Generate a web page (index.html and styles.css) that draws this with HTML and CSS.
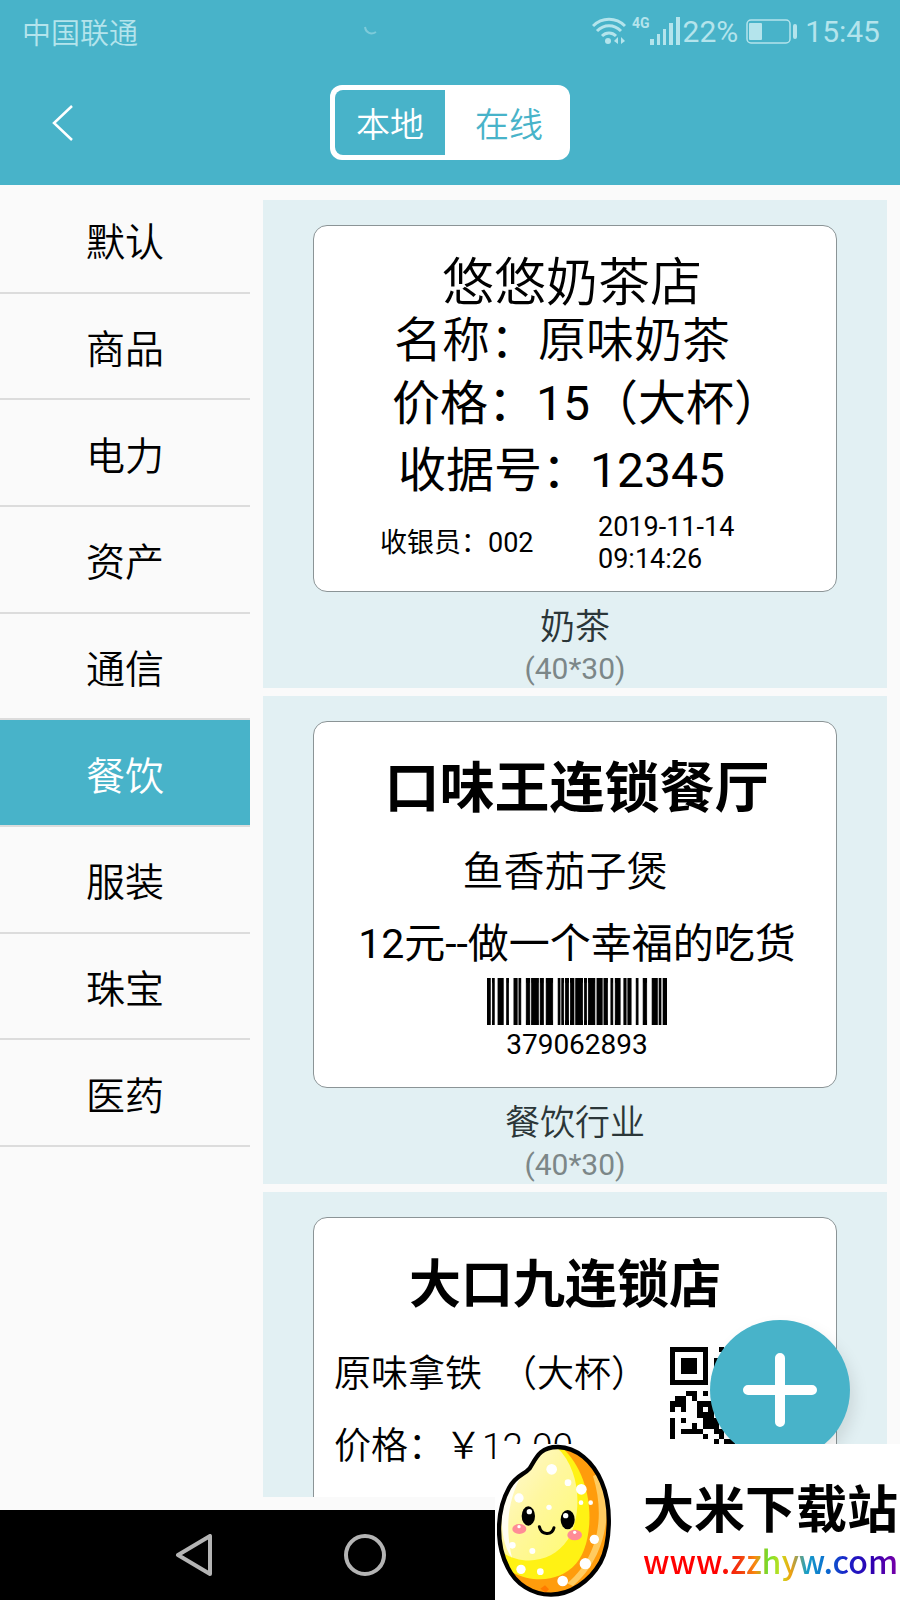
FILE: index.html
```html
<!DOCTYPE html>
<html lang="zh-CN">
<head>
  <meta charset="utf-8">
  <meta name="viewport" content="width=device-width, initial-scale=1">
  <title>标签模板</title>
  <link rel="stylesheet" href="styles.css">
</head>
<body>
  <header class="header">
    <div class="status">
      <span class="carrier">中国联通</span>
      <svg class="moon" width="14" height="10" viewBox="0 0 14 10"><path d="M1 1c1 6 6 8 11 5" fill="none" stroke="#7dcbda" stroke-width="2"/></svg>
      <div class="status-right">
        <svg class="wifi" width="34" height="28" viewBox="0 0 34 28">
          <g fill="none" stroke="#b4e4ec" stroke-width="3">
            <path d="M1 9C10 0 24 0 33 9"/>
            <path d="M5 14c7-7 17-7 24 0"/>
            <path d="M10 19c4-4 10-4 14 0"/>
          </g>
          <circle cx="16" cy="24" r="3" fill="#b4e4ec"/>
          <path d="M26 20v7l-4-3zM29 20v7l4-3z" fill="#b4e4ec"/>
        </svg>
        <span class="net">4G</span>
        <svg class="signal" width="30" height="28" viewBox="0 0 30 28">
          <path d="M0 22h4v6H0zM7 17h3v11H7zM13 12h3v16h-3zM19 6h4v22h-4zM26 0h4v28h-4z" fill="#b4e4ec"/>
        </svg>
        <span class="percent">22%</span>
        <svg class="battery" width="51" height="25" viewBox="0 0 51 25">
          <rect x="1" y="1" width="43" height="23" rx="4" fill="none" stroke="#b4e4ec" stroke-width="1.5"/>
          <rect x="3" y="4" width="13" height="17" rx="1" fill="#b4e4ec"/>
          <rect x="47" y="5" width="4" height="15" rx="2" fill="#b4e4ec"/>
        </svg>
        <span class="time">15:45</span>
      </div>
    </div>
    <div class="titlebar">
      <button class="back" aria-label="返回">
        <svg width="22" height="38" viewBox="0 0 22 38"><path d="M20 2L2 19l18 17" fill="none" stroke="#fff" stroke-width="2.5"/></svg>
      </button>
      <div class="toggle">
        <button class="toggle-item on">本地</button>
        <button class="toggle-item">在线</button>
      </div>
    </div>
  </header>

  <main class="main">
    <nav class="sidebar">
      <button>默认</button>
      <button>商品</button>
      <button>电力</button>
      <button>资产</button>
      <button>通信</button>
      <button class="active">餐饮</button>
      <button>服装</button>
      <button>珠宝</button>
      <button>医药</button>
    </nav>

    <section class="list">
      <article class="card">
        <div class="label tea">
          <h2>悠悠奶茶店</h2>
          <p class="name">名称：原味奶茶</p>
          <p class="price">价格：15（大杯）</p>
          <p class="receipt">收据号：12345</p>
          <div class="foot">
            <span>收银员：002</span>
            <span>2019-11-14<br>09:14:26</span>
          </div>
        </div>
        <p class="card-name">奶茶</p>
        <p class="card-size">(40*30)</p>
      </article>

      <article class="card">
        <div class="label restaurant">
          <h2>口味王连锁餐厅</h2>
          <p class="dish">鱼香茄子煲</p>
          <p class="slogan">12元--做一个幸福的吃货</p>
          <svg class="barcode" width="180" height="47" viewBox="48 0 542 10" preserveAspectRatio="none">
            <path stroke="#000" stroke-width="2" d="M48 0h10v10h-10zM64 0h6v10h-6zM81 0h16v10h-16zM107 0h6v10h-6zM129 0h10v10h-10zM144 0h6v10h-6zM166 0h11v10h-11zM182 0h21v10h-21zM208 0h10v10h-10zM226 0h20v10h-20zM262 0h6v10h-6zM273 0h6v10h-6zM284 0h10v10h-10zM299 0h11v10h-11zM315 0h21v10h-21zM341 0h7v10h-7zM353 0h20v10h-20zM379 0h16v10h-16zM400 0h11v10h-11zM421 0h6v10h-6zM434 0h15v10h-15zM460 0h7v10h-7zM472 0h10v10h-10zM497 0h6v10h-6zM518 0h11v10h-11zM545 0h16v10h-16zM566 0h6v10h-6zM578 0h12v10h-12z"/>
          </svg>
          <p class="code">379062893</p>
        </div>
        <p class="card-name">餐饮行业</p>
        <p class="card-size">(40*30)</p>
      </article>

      <article class="card">
        <div class="label coffee">
          <h2>大口九连锁店</h2>
          <div class="coffee-row">
            <div class="coffee-text">
              <p>原味拿铁&nbsp;&nbsp;（大杯）</p>
              <p>价格：￥12.00</p>
            </div>
            <svg class="qr" width="136" height="136" viewBox="0 0 25 25" shape-rendering="crispEdges">
              <path fill-rule="evenodd" d="M0 0h7v7H0zM1 1v5h5V1zM2 2h3v3H2zM18 0h7v7h-7zM19 1v5h5V1zM20 2h3v3h-3zM0 18h7v7H0zM1 19v5h5v-5zM2 20h3v3H2z"/>
              <path d="M9 0h1v1H9zM8 2h1v2H8zM3 8h2v1H3zM6 8h1v1H6zM1 9h2v1H1zM4 9h1v1H4zM0 10h3v1H0zM5 10h3v1H5zM0 11h1v1H0zM2 11h1v1H2zM5 11h1v1H5zM7 11h1v1H7zM5 12h3v1H5zM0 13h1v4H0zM2 13h1v1H2zM6 13h3v2H6zM4 14h1v1H4zM2 15h4v1H2zM8 15h2v1H8zM6 16h1v1H6zM9 16h1v1H9zM8 17h1v1H8zM10 17h2v1h-2z"/>
            </svg>
          </div>
        </div>
      </article>
    </section>
  </main>

  <footer class="navbar">
    <button aria-label="后退">
      <svg width="42" height="42" viewBox="0 0 42 42"><path d="M36 2v38L4 21z" fill="none" stroke="#b4b4b4" stroke-width="4" stroke-linejoin="round"/></svg>
    </button>
    <button aria-label="主屏幕">
      <svg width="42" height="42" viewBox="0 0 42 42"><circle cx="21" cy="21" r="19" fill="none" stroke="#b4b4b4" stroke-width="4"/></svg>
    </button>
  </footer>

  <button class="add" aria-label="新建">
    <svg width="76" height="76" viewBox="0 0 76 76"><path d="M38 6v64M6 38h64" stroke="#fff" stroke-width="10" stroke-linecap="round"/></svg>
  </button>

  <div class="watermark">
    <svg class="rice" width="115" height="154" viewBox="52 44 345 462">
      <defs>
        <clipPath id="body"><path d="M235 53C178 52 168 90 150 117C132 138 110 136 88 176C52 240 46 340 84 414C108 464 158 496 214 496C272 496 330 456 362 400C392 344 398 232 366 158C340 96 290 54 235 53Z"/></clipPath>
        <linearGradient id="skin" x1="0" y1="0" x2="1" y2="1">
          <stop offset="0" stop-color="#fff9e6"/>
          <stop offset="0.5" stop-color="#fff7a0"/>
          <stop offset="1" stop-color="#fffb70"/>
        </linearGradient>
      </defs>
      <g clip-path="url(#body)">
        <path d="M40 40h370v470H40z" fill="#ff9c0c"/>
        <path d="M365 130C400 230 385 380 280 470L262 462C350 390 380 270 340 140z" fill="#ffcb60"/>
        <path d="M230 40C350 130 350 330 290 402C240 460 160 460 100 430L40 380V40z" fill="#fff214"/>
        <path d="M215 40C310 110 308 260 265 330C220 400 130 410 70 370L40 300V40z" fill="url(#skin)"/>
        <path d="M66 250c2-60 30-110 66-125-40 70-60 150-35 260-24-30-32-80-31-135z" fill="#fffef2"/>
        <g fill="#fff">
          <circle cx="216" cy="120" r="16"/><circle cx="265" cy="160" r="10"/><circle cx="305" cy="180" r="16"/>
          <circle cx="304" cy="220" r="7"/><circle cx="333" cy="220" r="7"/><circle cx="118" cy="206" r="14"/>
          <circle cx="208" cy="234" r="8"/><circle cx="344" cy="330" r="14"/><circle cx="317" cy="403" r="17"/>
          <circle cx="249" cy="455" r="16"/><circle cx="182" cy="427" r="10"/><circle cx="124" cy="420" r="14"/>
          <circle cx="158" cy="365" r="9"/><circle cx="98" cy="348" r="10"/>
        </g>
        <path d="M182 478l14-10 12 12-10 10z" fill="#ff7a00"/>
      </g>
      <path d="M235 53C178 52 168 90 150 117C132 138 110 136 88 176C52 240 46 340 84 414C108 464 158 496 214 496C272 496 330 456 362 400C392 344 398 232 366 158C340 96 290 54 235 53Z" fill="none" stroke="#000" stroke-width="13"/>
      <ellipse cx="146" cy="260" rx="20" ry="29"/>
      <ellipse cx="264" cy="271" rx="21" ry="29"/>
      <circle cx="149" cy="247" r="8" fill="#fff"/>
      <circle cx="258" cy="259" r="8" fill="#fff"/>
      <path d="M179 292c6 26 38 28 44 3" fill="none" stroke="#000" stroke-width="9" stroke-linecap="round"/>
      <ellipse cx="119" cy="299" rx="21" ry="15" fill="#ff8c96"/>
      <ellipse cx="285" cy="317" rx="22" ry="16" fill="#ff8c96"/>
      <circle cx="118" cy="292" r="5" fill="#fff"/>
      <circle cx="285" cy="309" r="5" fill="#fff"/>
    </svg>
    <div class="site">
      <strong>大米下载站</strong>
      <a href="#">www.zzhyw.com</a>
    </div>
  </div>
</body>
</html>
```
FILE: styles.css
```css
* {
  box-sizing: border-box;
}

body {
  margin: 0;
  height: 100vh;
  display: flex;
  flex-direction: column;
  overflow: hidden;
  background: #fafafa;
  color: #000;
  font-family: Roboto, "Noto Sans CJK SC", sans-serif;
}

h2,
p {
  margin: 0;
  font-weight: normal;
  white-space: nowrap;
}

button {
  padding: 0;
  border: none;
  background: none;
  font-family: inherit;
  cursor: pointer;
}

svg {
  display: block;
  flex: none;
}

/* header */
.header {
  flex: none;
  height: 185px;
  background: #48b3c9;
}

.status {
  display: flex;
  align-items: center;
  justify-content: space-between;
  height: 62px;
  padding: 0 20px 0 22px;
  color: #b4e4ec;
  font-size: 30px;
}

.carrier {
  font-size: 29px;
  font-weight: 350;
}

.moon {
  margin-left: 12px;
}

.status-right {
  display: flex;
  align-items: center;
}

.net {
  align-self: flex-start;
  margin-left: 6px;
  font-size: 14px;
  font-weight: bold;
  line-height: 18px;
}

.percent {
  margin: 0 8px 0 3px;
}

.time {
  margin-left: 8px;
}

.titlebar {
  display: grid;
  grid-template-columns: 1fr auto 1fr;
  align-items: center;
  height: 121px;
}

.back {
  justify-self: start;
  margin-left: 52px;
}

.toggle {
  display: flex;
  width: 240px;
  height: 75px;
  padding: 5px;
  border-radius: 12px;
  background: #fff;
}

.toggle-item {
  flex: 1;
  padding-left: 8px;
  color: #48b3c9;
  font-size: 34px;
  font-weight: 350;
}

.toggle-item.on {
  flex: none;
  width: 110px;
  padding-left: 0;
  border-radius: 8px 0 0 8px;
  background: #48b3c9;
  color: #fff;
}

/* categories */
.main {
  flex: 1;
  min-height: 0;
  display: flex;
}

.sidebar {
  flex: none;
  width: 250px;
  height: 962px;
  padding-top: 2px;
  display: grid;
  grid-auto-rows: 1fr;
}

.sidebar button {
  border-bottom: 2px solid #dcdcdc;
  color: #000;
  font-size: 39px;
  font-weight: 350;
}

.sidebar .active {
  background: #48b3c9;
  background-clip: padding-box;
  color: #fff;
}

/* templates */
.list {
  flex: 1;
  margin: 15px 13px 13px;
  display: flex;
  flex-direction: column;
  gap: 8px;
  overflow: hidden;
}

.card {
  flex: none;
  height: 488px;
  padding: 25px 50px 0;
  background: #e2f0f3;
  text-align: center;
}

.label {
  height: 367px;
  padding-top: 24px;
  border: 1px solid #8b9496;
  border-radius: 14px;
  background: #fff;
}

.card-name {
  margin-top: 14px;
  color: #2b3638;
  font-size: 35px;
  font-weight: 350;
  line-height: 44px;
}

.card-size {
  color: #7c8788;
  font-size: 30px;
  line-height: 38px;
}

.tea {
  padding-top: 28px;
  text-align: left;
  font-size: 48px;
}

.tea h2 {
  padding-left: 128px;
  font-size: 52px;
  font-weight: 350;
  line-height: 60px;
}

.name {
  padding-left: 80px;
  font-weight: 350;
  line-height: 54px;
}

.price {
  padding-left: 78px;
  line-height: 72px;
}

.receipt {
  padding-left: 84px;
  line-height: 62px;
}

.foot {
  display: grid;
  grid-template-columns: 218px auto;
  align-items: center;
  padding: 9px 0 0 66px;
  font-size: 27px;
  line-height: 32px;
}

.restaurant {
  padding-left: 4px;
}

.restaurant h2,
.coffee h2 {
  font-size: 55px;
  font-weight: bold;
  line-height: 84px;
}

.dish,
.slogan {
  font-size: 41px;
  line-height: 60px;
}

.dish {
  padding-right: 24px;
  font-weight: 350;
  line-height: 84px;
}

.barcode {
  margin: 4px auto 0;
}

.code {
  font-size: 28px;
  line-height: 40px;
}

.coffee h2 {
  padding-right: 20px;
  font-size: 52px;
  line-height: 88px;
}

.coffee-row {
  display: flex;
  justify-content: space-between;
  padding: 9px 30px 0 20px;
  text-align: left;
}

.coffee-text p {
  font-size: 37px;
  font-weight: 350;
  line-height: 72px;
}

.qr {
  margin-top: 8px;
}

/* system bar */
.navbar {
  flex: none;
  display: flex;
  gap: 128px;
  height: 90px;
  padding-left: 174px;
  background: #000;
}

.add {
  position: fixed;
  right: 50px;
  bottom: 140px;
  width: 140px;
  height: 140px;
  display: flex;
  align-items: center;
  justify-content: center;
  border-radius: 50%;
  background: #48b3c9;
  box-shadow: 4px 8px 16px rgba(0, 0, 0, 0.1);
}

.watermark {
  position: fixed;
  right: 0;
  bottom: 0;
  display: flex;
  width: 405px;
  height: 156px;
  padding-left: 2px;
  background: #fff;
}

.site {
  display: flex;
  flex-direction: column;
  margin-left: 31px;
  padding-top: 32px;
  font-family: "Noto Sans CJK SC", sans-serif;
  white-space: nowrap;
}

.site strong {
  font-size: 51px;
  line-height: 60px;
}

.site a {
  align-self: flex-start;
  background: linear-gradient(90deg, #f00 0 30%, #f23a10 38%, #f98a10 44%, #6ee02c 49%, #c8e020 54%, #f0a010 58%, #18a0c8 64%, #0a6cd0 72%, #1a20c8 80%, #3000b0 90%, #7a00a8);
  background-clip: text;
  -webkit-background-clip: text;
  color: transparent;
  font-size: 32px;
  font-weight: 500;
  line-height: 48px;
  text-decoration: none;
}
```
